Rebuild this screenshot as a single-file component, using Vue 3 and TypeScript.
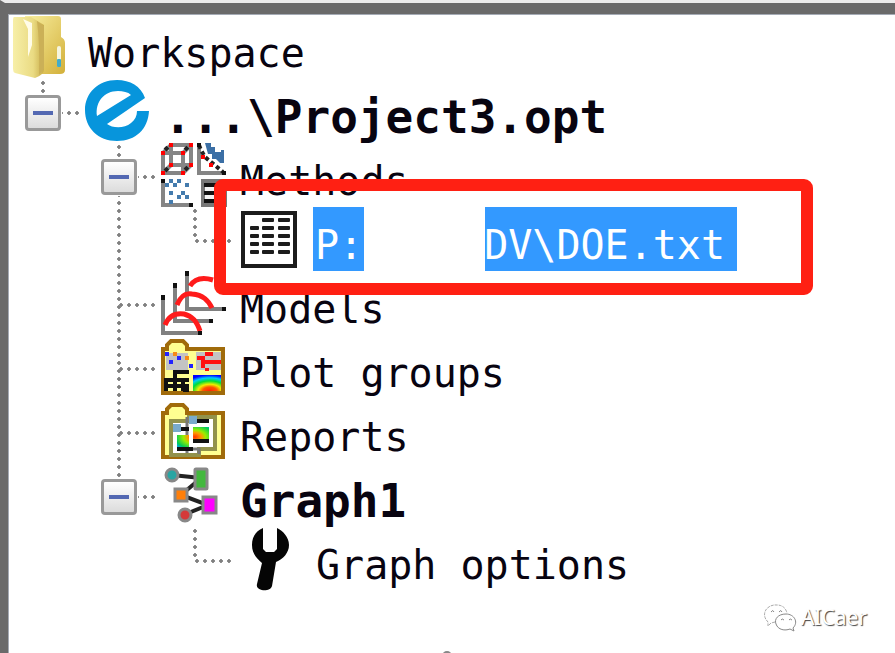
<script setup lang="ts">
type IconName = 'project' | 'methods' | 'table' | 'models' | 'plots' | 'reports' | 'graph' | 'wrench'

interface Row {
  label: string
  icon: IconName
  // Connector drawn in each indent cell, from the outermost level inwards
  cells: string[]
  bold?: boolean
  selected?: boolean
}

const rows: Row[] = [
  { label: '...\\Project3.opt', icon: 'project', cells: ['root box'], bold: true },
  { label: 'Methods', icon: 'methods', cells: ['', 'line box'] },
  { label: 'P:', icon: 'table', cells: ['', 'line', 'end'], selected: true },
  { label: 'Models', icon: 'models', cells: ['', 'line tee'] },
  { label: 'Plot groups', icon: 'plots', cells: ['', 'line tee'] },
  { label: 'Reports', icon: 'reports', cells: ['', 'line tee'] },
  { label: 'Graph1', icon: 'graph', cells: ['', 'last box'], bold: true },
  { label: 'Graph options', icon: 'wrench', cells: ['', '', 'end'] },
]

const tableRows = [0, 1, 2, 3, 4]
</script>

<template>
  <main class="panel">
    <span class="handle top"></span>
    <span class="handle bottom"></span>
    <ul class="tree">
      <li class="row">
        <span class="icon">
          <svg viewBox="0 0 76 64" aria-hidden="true">
            <defs>
              <linearGradient id="fold" x1="0" y1="0" x2="1" y2="1">
                <stop offset="0" stop-color="#f8efa0" /><stop offset="1" stop-color="#d3b03a" />
              </linearGradient>
              <linearGradient id="front" x1="0" y1="0" x2="1" y2="0">
                <stop offset="0" stop-color="#f7efa8" /><stop offset=".65" stop-color="#eadb83" /><stop offset="1" stop-color="#c9ad48" />
              </linearGradient>
            </defs>
            <path d="M20 1H53Q56 1 56 4V22Q60 24 60 28V55Q60 59 55 59H30L20 50Z" fill="url(#fold)" />
            <path d="M9 2H26L39 10V54Q39 60 30 63L10 58Q8 57 8 54V5Q8 2 9 2Z" fill="url(#front)" />
            <path d="M18 4L27 8V30L23 42V14Z" fill="#fffce8" />
            <path d="M32 6L39 11V54L34 60Q35 30 32 6Z" fill="#cbb057" />
            <rect x="52" y="31" width="4" height="21" rx="2" fill="#f5f5df" /><rect x="52" y="44" width="4" height="8" rx="1" fill="#43acc9" />
          </svg>
        </span>
        <span class="label">Workspace</span>
      </li>

      <li v-for="row in rows" :key="row.icon" class="row">
        <span v-for="(cell, i) in row.cells" :key="i" class="cell" :class="cell">
          <button v-if="cell.includes('box')" class="toggle" type="button" :aria-label="row.label"></button>
        </span>
        <span class="icon">
          <svg v-if="row.icon === 'project'" viewBox="0 0 76 64" aria-hidden="true">
            <path fill-rule="evenodd" d="M36 1C49 1 60 7 64 19L26 45C31 49 43 50 50 44C54 41 56 37 56 32H68C67 50 55 62 36 62C17 62 4 49 4 31C4 14 17 1 36 1ZM37 12C23 12 14 23 16 37L50 16C47 13 42 12 37 12Z" fill="#0795dc" />
          </svg>
          <svg v-else-if="row.icon === 'methods'" viewBox="0 0 76 64" aria-hidden="true">
            <g fill="none" stroke="#858585" stroke-width="4">
              <path d="M6 10H26V30H6ZM14 2H34V22H14ZM6 10L14 2M26 10L34 2M6 30L14 22M26 30L34 22" />
              <path d="M42 2V30H67M6 38V62H34" />
            </g>
            <path d="M8 7l4-4M28 7l4-4M8 28l3-3M28 27l4-4M42 2l2 5 4 7 6 5 6 5 6 5" fill="none" stroke="#222" stroke-width="4" stroke-dasharray="4 3" />
            <g fill="#f00"><path d="M12 0h4v4h-4zM32 0h4v4h-4zM4 8h4v4H4zM24 8h4v4h-4zM12 20h4v4h-4zM32 20h4v4h-4zM4 28h4v4H4zM24 28h4v4h-4zM44 12h4v4h-4zM52 20h4v4h-4z" /></g>
            <path d="M48 0h6v4h4v5h6V7h3v13h-4l-4-4h-4v-5h-4z" fill="#3b6fa5" />
            <g fill="#447bad"><path d="M8 40h4v4H8zM12 36h4v4h-4zM16 40h4v4h-4zM20 36h4v4h-4zM28 40h4v4h-4zM12 48h4v4h-4zM24 48h4v4h-4zM20 52h4v4h-4zM28 52h4v4h-4zM12 57h4v4h-4z" /></g>
            <path d="M4 36h4v4H4zM32 60h4v4h-4zM40 0h4v4h-4zM65 28h4v4h-4z" fill="#111" />
            <path d="M46 38h22v24H46z" fill="#f3f3f3" stroke="#777" stroke-width="4" />
            <path d="M47 42h20M47 50h20M47 58h20" stroke="#111" stroke-width="4" />
          </svg>
          <svg v-else-if="row.icon === 'table'" viewBox="0 0 76 64" aria-hidden="true">
            <rect x="10" y="6" width="52" height="53" fill="#fff" stroke="#1c1c1c" stroke-width="4" />
            <g fill="#1c1c1c">
              <template v-for="n in tableRows" :key="n">
                <rect v-if="n > 0" x="17" :y="11 + n * 8" width="9" height="4" rx="1" />
                <rect x="29" :y="11 + n * 8" width="12" height="4" rx="1" />
                <rect x="45" :y="11 + n * 8" width="12" height="4" rx="1" />
              </template>
            </g>
          </svg>
          <svg v-else-if="row.icon === 'models'" viewBox="0 0 76 64" aria-hidden="true">
            <path d="M30 2V38H67M18 14V50H54M6 26V62H43" fill="none" stroke="#808080" stroke-width="4" />
            <path d="M8 54C12 44 20 42 27 43C36 45 40 51 43 60M20 34C24 24 29 22 35 23C46 24 51 29 55 37M33 15C38 7 46 6 56 9" fill="none" stroke="#ff1b1b" stroke-width="5" />
            <path d="M28 0h4v5h-4zM16 12h4v5h-4zM4 24h4v5H4zM65 36h4v4h-4zM52 48h4v4h-4zM41 60h4v4h-4z" fill="#111" />
          </svg>
          <svg v-else-if="row.icon === 'plots'" viewBox="0 0 76 64" aria-hidden="true">
            <defs>
              <radialGradient id="heat" cx=".6" cy="1" r="1">
                <stop offset="0" stop-color="#f20" /><stop offset=".25" stop-color="#f50" /><stop offset=".42" stop-color="#ee0" /><stop offset=".63" stop-color="#0d3" /><stop offset=".82" stop-color="#0cf" /><stop offset="1" stop-color="#00f" />
              </radialGradient>
            </defs>
            <path d="M6 58V14H10V10L14 6H26L30 10V14H66V58Z" fill="#ffff91" stroke="#a06b0b" stroke-width="4" />
            <path d="M9 18H31V35H9ZM39 17H64V35H39Z" fill="#c3c3c3" />
            <path d="M36 40H64V56H36Z" fill="url(#heat)" />
            <g fill="#22f"><path d="M8 17h4v4H8zM20 21h4v4h-4zM12 25h4v4h-4zM32 29h4v4h-4z" /></g>
            <path d="M16 17h4v4h-4zM28 21h4v4h-4z" fill="#f78a17" />
            <path d="M48 17h8v4h-8zM40 21h8v4h-8zM48 25h16v4H44v-4zM44 29h4v4h4v3h-4v-3h-4z" fill="#f11" />
            <path d="M32 37H18V45H32M18 45H9V56M9 51H32M18 43V56M26 45V56M26 55H32" fill="none" stroke="#111" stroke-width="4" />
          </svg>
          <svg v-else-if="row.icon === 'reports'" viewBox="0 0 76 64" aria-hidden="true">
            <defs>
              <radialGradient id="spot" cx=".55" cy=".5" r=".7">
                <stop offset="0" stop-color="#f30" /><stop offset=".3" stop-color="#f90" /><stop offset=".5" stop-color="#9e0" /><stop offset=".85" stop-color="#0c5" /><stop offset="1" stop-color="#0ad" />
              </radialGradient>
            </defs>
            <path d="M6 58V14H10V10L14 6H26L30 10V14H66V58Z" fill="#ffff91" stroke="#a06b0b" stroke-width="4" />
            <path d="M14 22V56H42V50H58V18H32V22Z" fill="#fff" stroke="#92924b" stroke-width="4" />
            <path d="M30 18V54M32 50H42V55" fill="none" stroke="#777" stroke-width="3" />
            <path d="M16 25h8v8h-8zM32 17h8v8h-8z" fill="#79aacb" />
            <path d="M40 20h12v4H40zM24 28h8v4h-8zM36 40h16v4H36zM20 48h16v4H20z" fill="#111" />
            <path d="M36 28h16v12H36zM20 36h12v12H20z" fill="url(#spot)" />
          </svg>
          <svg v-else-if="row.icon === 'graph'" viewBox="0 0 76 64" aria-hidden="true">
            <path d="M15 12L44 15L24 32L51 42L29 51" fill="none" stroke="#222" stroke-width="4" />
            <g stroke="#888" stroke-width="3">
              <circle cx="15" cy="12" r="6" fill="#29a5a3" />
              <rect x="38" y="6" width="12" height="20" rx="1" fill="#43b83e" />
              <rect x="18" y="26" width="12" height="12" fill="#ff7f09" />
              <rect x="46" y="34" width="13" height="16" fill="#f0f" />
              <circle cx="28" cy="52" r="6" fill="#d43939" />
            </g>
          </svg>
          <svg v-else viewBox="0 0 76 64" aria-hidden="true">
            <path d="M30 1V22L33 25H41L44 22V1C50 4 56 10 56 18C56 26 50 32 43 35L39 59C37 66 22 64 24 57L29 36C23 31 19 26 19 18C19 10 23 4 30 1Z" fill="#050505" />
          </svg>
        </span>
        <span v-if="row.selected" class="label selected">
          <span>{{ row.label }}</span><span>DV\DOE.txt</span>
        </span>
        <span v-else class="label" :class="{ bold: row.bold }">{{ row.label }}</span>
        <span v-if="row.selected" class="frame"><span class="cover"></span></span>
      </li>
    </ul>

    <footer class="mark">
      <svg viewBox="0 0 34 30" aria-hidden="true">
        <path d="M12 20L8 21L5 24V20C-3 12 4 2 14 3C19 3 23 6 24 11" fill="#fff" stroke="#aaa" stroke-dasharray="3 1" />
        <path d="M30 26C36 20 31 12 23 12C15 12 11 17 13 22C15 28 22 29 27 27L31 29Z" fill="#fff" stroke="#888" />
        <path d="M8 10q2-3 3 0M16 10q2-3 3 0M18 18q1-2 3 0M26 18q1-2 3 0" fill="none" stroke="#888" />
      </svg>
      <span>AICaer</span>
    </footer>
  </main>
</template>

<style>
body {
  margin: 0;
  background: #fff;
}
</style>

<style scoped>
.panel {
  position: relative;
  box-sizing: border-box;
  min-height: 100vh;
  overflow: hidden;
  border-top: 3px solid #ececec;
  border-left: 5px solid #6a6a6a;
  background: #fff;
  box-shadow: inset 3px 11px #6a6a6a, inset 4px 12px #a5abb5;
}
.handle {
  position: absolute;
  left: 50%;
  box-sizing: border-box;
  width: 10px;
  height: 10px;
  margin-left: -8px;
  border: 2px solid #888;
  border-radius: 50%;
  background: #fff;
}
.top {
  top: -10px;
}
.bottom {
  bottom: -8px;
}
.tree {
  margin: 0;
  padding: 12px 0 0;
  list-style: none;
}
.row {
  position: relative;
  display: flex;
  align-items: center;
  height: 64px;
}
.icon,
.cell {
  position: relative;
  box-sizing: border-box;
  flex: 0 0 76px;
  height: 64px;
}
.icon svg {
  display: block;
  width: 76px;
  height: 64px;
}
.cell {
  display: flex;
  align-items: center;
  justify-content: center;
  padding-top: 4px;
}
.cell::before,
.cell::after {
  position: absolute;
  background-image: radial-gradient(circle, #808080 0 1px, #999 2px, transparent 2px);
}
.line::before,
.last::before,
.end::before,
.root::before {
  content: '';
  left: 36px;
  top: 0;
  width: 4px;
  height: 64px;
  background-size: 4px 8px;
}
.last::before,
.end::before,
.root::before {
  height: 32px;
}
.box::after,
.tee::after,
.end::after {
  content: '';
  left: 36px;
  top: 32px;
  width: 40px;
  height: 4px;
  background-size: 8px 4px;
}
.toggle {
  position: relative;
  z-index: 1;
  width: 36px;
  height: 36px;
  padding: 0 5px;
  border: 3px solid #999;
  border-radius: 4px;
  background: linear-gradient(#fff, #dcdcdc);
  box-shadow: 0 0 0 1px #fff;
}
.toggle::before {
  content: '';
  display: block;
  height: 4px;
  background: #5368b2;
}
.label {
  padding: 12px 0 0 7px;
  color: #080410;
  font-family: 'DejaVu Sans Mono', 'Liberation Mono', monospace;
  font-size: 40px;
  line-height: 52px;
  white-space: pre;
}
.bold {
  font-size: 46px;
  font-weight: bold;
}
.selected {
  display: flex;
  gap: 121px;
  margin-left: 4px;
  padding: 12px 12px 0 2px;
  background: #3399ff;
  color: #fff;
}
.frame {
  position: absolute;
  z-index: 2;
  top: -28px;
  left: 209px;
  box-sizing: border-box;
  width: 599px;
  height: 116px;
  border: 12px solid #ff2013;
  border-radius: 9px;
}
.cover {
  position: absolute;
  top: 0;
  left: 138px;
  width: 121px;
  height: 92px;
  background: #fff;
}
.mark {
  position: absolute;
  right: 28px;
  bottom: 20px;
  display: flex;
  align-items: center;
  gap: 4px;
  color: #fff;
  font-family: 'Noto Sans', sans-serif;
  font-size: 21px;
  line-height: 32px;
  text-shadow: 1px 1px 1px #444;
}
.mark svg {
  width: 34px;
  height: 30px;
}
</style>
